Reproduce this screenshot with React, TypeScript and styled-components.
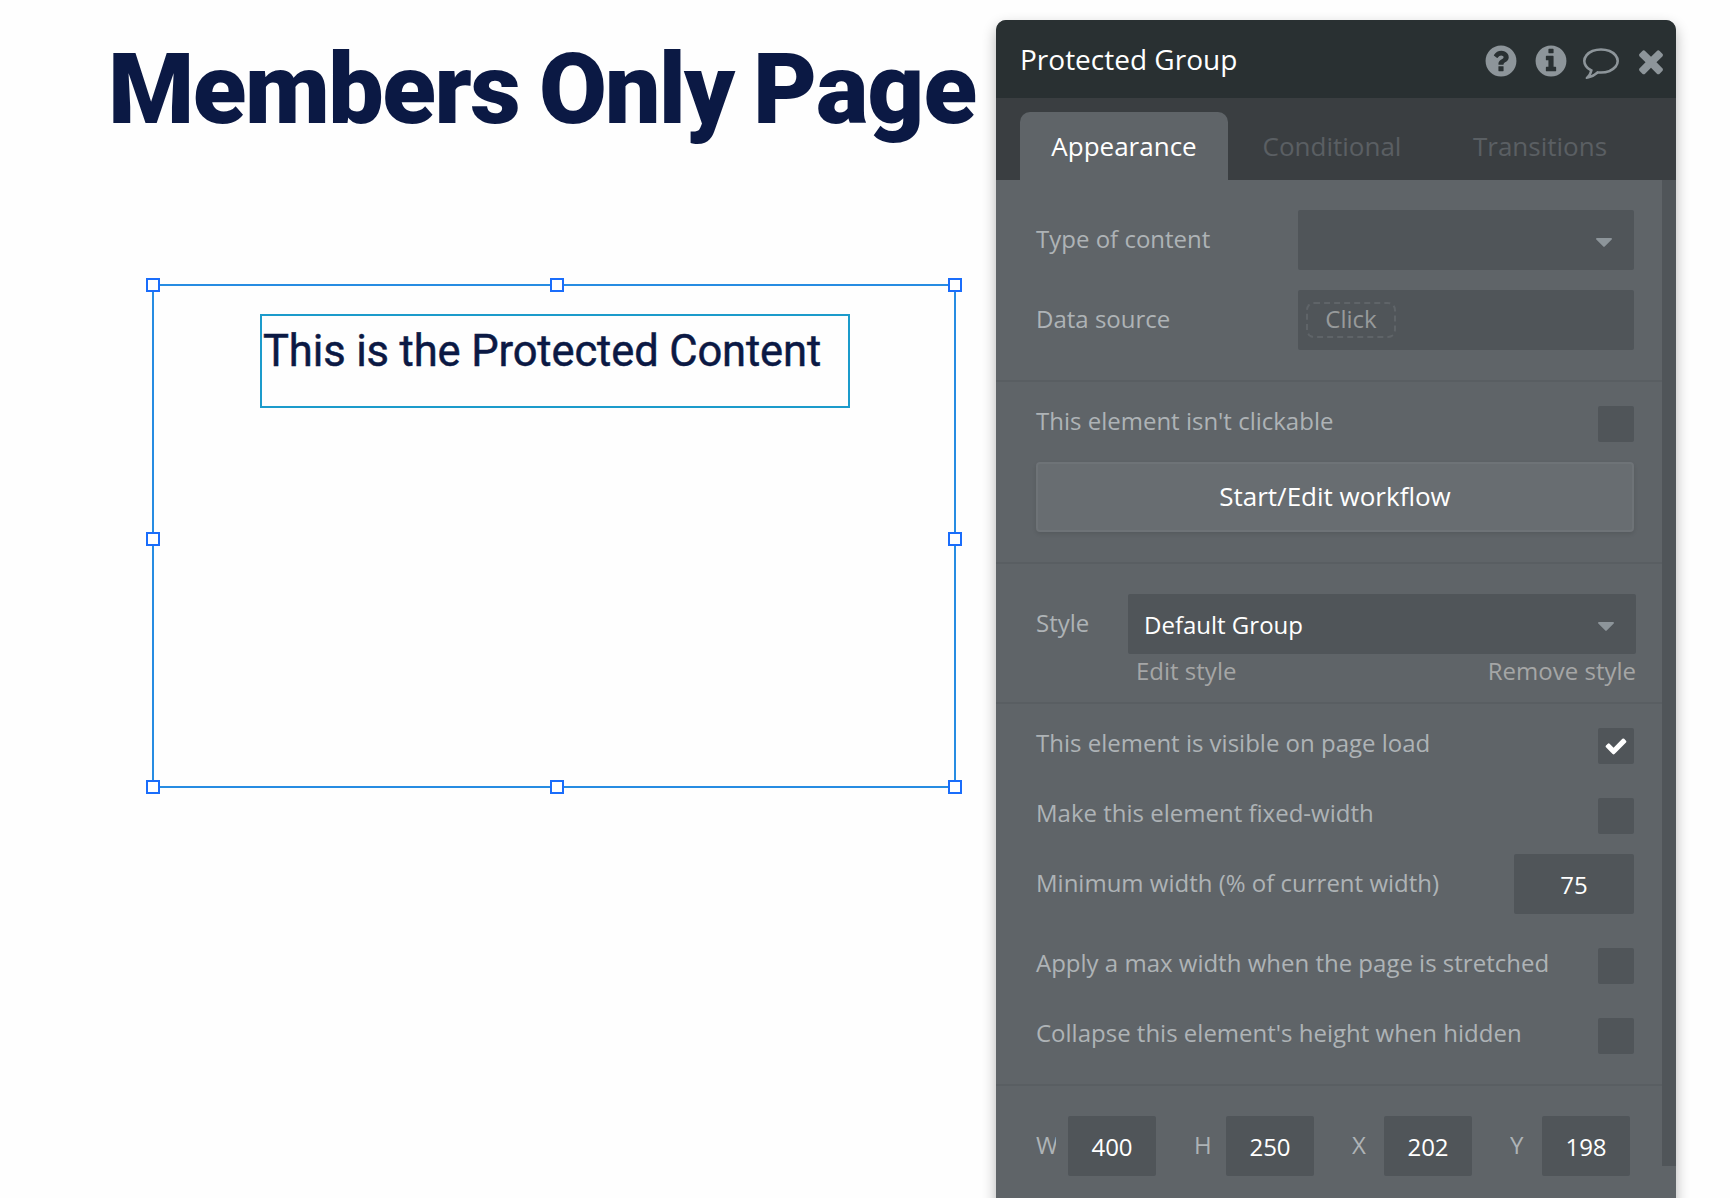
import React from "react";
import styled, { createGlobalStyle, css } from "styled-components";

const GlobalStyle = createGlobalStyle`
  *, *::before, *::after { box-sizing: border-box; }
  html, body { margin: 0; padding: 0; background: #fefefe; overflow: hidden; }
  body { font-family: "Open Sans", "Noto Sans", sans-serif; }
`;

const Workspace = styled.div`
  display: flex;
  width: 1730px;
  height: 1198px;
  overflow: hidden;
  background: #fefefe;
`;

const Canvas = styled.main`
  position: relative;
  flex: 0 0 996px;
  color: #0b1944;
  font-family: Roboto, "Liberation Sans", sans-serif;
`;

const Heading = styled.h1`
  position: absolute;
  left: 108px;
  top: 32px;
  display: flex;
  margin: 0;
  font-size: 98.5px;
  font-weight: 900;
  line-height: 116px;
  white-space: pre;
`;

const Word = styled.span<{ $width: number; $spacing: number }>`
  flex: none;
  width: ${(p) => p.$width}px;
  letter-spacing: ${(p) => p.$spacing}px;
`;

const SelectedGroup = styled.section`
  position: absolute;
  left: 152px;
  top: 284px;
  width: 804px;
  height: 504px;
  border: 2px solid #278ce2;
`;

const TextElement = styled.p`
  position: absolute;
  left: 106px;
  top: 28px;
  width: 590px;
  height: 94px;
  margin: 0;
  padding: 9px 0 0 1px;
  border: 2px solid #1c9bcb;
  font-size: 43.5px;
  font-weight: 400;
  line-height: 54px;
  letter-spacing: -0.12px;
  -webkit-text-stroke: 0.5px currentColor;
  white-space: nowrap;
`;

const Handle = styled.span<{ $x: number; $y: number }>`
  position: absolute;
  left: ${(p) => p.$x}px;
  top: ${(p) => p.$y}px;
  width: 14px;
  height: 14px;
  border: 2px solid #1a6dfb;
  background: #fff;
`;

const Panel = styled.aside`
  display: flex;
  flex-direction: column;
  flex: 0 0 680px;
  height: 1200px;
  margin-top: 20px;
  border-radius: 10px 10px 0 0;
  background: #5f6468;
  box-shadow: 0 6px 14px rgba(0, 0, 0, 0.3);
`;

const PanelHeader = styled.header`
  display: flex;
  align-items: center;
  justify-content: space-between;
  flex: 0 0 78px;
  padding: 0 7px 0 24px;
  border-radius: 10px 10px 0 0;
  background: #293032;
`;

const PanelTitle = styled.h2`
  margin: 0;
  color: #fff;
  font-size: 28px;
  font-weight: 400;
  line-height: 38px;
`;

const HeaderActions = styled.div`
  display: flex;
  gap: 14px;
  padding-top: 4px;
  color: #8d959a;
`;

const IconButton = styled.button`
  display: flex;
  padding: 0;
  border: 0;
  background: none;
  color: inherit;
`;

const TabBar = styled.nav`
  display: flex;
  align-items: flex-end;
  flex: 0 0 82px;
  padding-left: 24px;
  background: #3a3e41;
`;

const Tab = styled.button<{ $active?: boolean }>`
  width: 208px;
  height: 68px;
  padding: 0;
  border: 0;
  border-radius: 10px 10px 0 0;
  background: ${(p) => (p.$active ? "#5f6468" : "transparent")};
  color: ${(p) => (p.$active ? "#fff" : "#5a5f63")};
  font: 400 26px/36px "Open Sans", sans-serif;
`;

const PanelBody = styled.div`
  display: flex;
  flex: 1;
`;

const Properties = styled.div`
  flex: 0 0 666px;
`;

const ScrollTrack = styled.div`
  flex: 0 0 14px;
  height: 986px;
  background: #505559;
`;

const Section = styled.section<{ $height: number; $top: number; $gap?: number }>`
  display: flex;
  flex-direction: column;
  gap: ${(p) => p.$gap ?? 20}px;
  height: ${(p) => p.$height}px;
  padding: ${(p) => p.$top}px 28px 0 40px;
  border-bottom: 2px solid #595e62;
`;

const Row = styled.div<{ $height?: number; $tight?: boolean }>`
  display: flex;
  align-items: center;
  justify-content: space-between;
  flex: none;
  height: ${(p) => p.$height ?? 60}px;
  margin-top: ${(p) => (p.$tight ? -14 : 0)}px;
`;

const Label = styled.label<{ $lift?: number }>`
  padding-bottom: ${(p) => p.$lift ?? 2}px;
  color: #aeb3b6;
  font-size: 24px;
  line-height: 32px;
  white-space: nowrap;
`;

const fieldSurface = css`
  border-radius: 2px;
  background: #505559;
`;

const Field = styled.div<{ $width: number }>`
  ${fieldSurface}
  display: flex;
  align-items: center;
  flex: none;
  width: ${(p) => p.$width}px;
  height: 60px;
  padding-left: 8px;
`;

const SelectField = styled(Field)<{ $shift?: number }>`
  justify-content: space-between;
  margin-right: ${(p) => -(p.$shift ?? 0)}px;
  padding: 2px 22px 0 16px;
  color: #fff;
  font-size: 24px;
  line-height: 32px;
`;

const NumberField = styled(Field)`
  justify-content: center;
  padding: 2px 0 0;
  color: #fff;
  font-size: 24px;
  line-height: 32px;
`;

const ExpressionSlot = styled.span`
  display: flex;
  align-items: center;
  justify-content: center;
  width: 90px;
  height: 36px;
  padding-bottom: 2px;
  border: 2px dashed #5f6468;
  border-radius: 8px;
  color: #979a9b;
  font-size: 24px;
  line-height: 30px;
`;

const Checkbox = styled.span`
  ${fieldSurface}
  display: flex;
  align-items: center;
  justify-content: center;
  flex: none;
  width: 36px;
  height: 36px;
  padding-bottom: 1px;
  color: #fff;
`;

const WorkflowButton = styled.button`
  flex: none;
  height: 70px;
  padding: 0 0 2px;
  border: 2px solid #6e7377;
  border-radius: 4px;
  background: #686d71;
  box-shadow: 0 2px 4px rgba(0, 0, 0, 0.1);
  color: #fff;
  font: 400 26px/36px "Open Sans", sans-serif;
`;

const StyleLinks = styled.div`
  display: flex;
  justify-content: space-between;
  margin: 1px -2px 0 100px;
  color: #a5a6a6;
  font-size: 24px;
  line-height: 32px;
`;

const Geometry = styled.div`
  display: flex;
  gap: 38px;
`;

const GeometryItem = styled.div`
  display: flex;
  align-items: center;
  gap: 12px;
`;

const AxisLabel = styled(Label)`
  width: 20px;
  overflow: hidden;
`;

const CaretIcon = styled.svg`
  margin-top: 2px;
  fill: #8d959a;
`;

const ICONS = {
  help:
    "M1024 1376v-192q0-14-9-23t-23-9h-192q-14 0-23 9t-9 23v192q0 14 9 23t23 9h192q14 0 23-9t9-23zm256-672q0-88-55.5-163t-138.5-116-170-41q-243 0-371 213-15 24 8 42l132 100q7 6 19 6 16 0 25-12 53-68 86-92 34-24 86-24 48 0 85.5 26t37.5 59q0 38-20 61t-68 45q-63 28-115.5 86.5t-52.5 125.5v36q0 14 9 23t23 9h192q14 0 23-9t9-23q0-19 21.5-49.5t54.5-49.5q32-18 49-28.5t46-35 44.5-48 28-60.5 12.5-81z",
  info:
    "M1152 1376v-160q0-14-9-23t-23-9h-96v-512q0-14-9-23t-23-9h-320q-14 0-23 9t-9 23v160q0 14 9 23t23 9h96v320h-96q-14 0-23 9t-9 23v160q0 14 9 23t23 9h448q14 0 23-9t9-23zm-128-896v-160q0-14-9-23t-23-9h-192q-14 0-23 9t-9 23v160q0 14 9 23t23 9h192q14 0 23-9t9-23z",
  comment:
    "M896 384q-204 0-381.5 69.5t-282 187.5-104.5 255q0 112 71.5 213.5t201.5 175.5l87 50-27 96q-24 91-70 172 152-63 275-171l43-38 57 6q69 8 130 8 204 0 381.5-69.5t282-187.5 104.5-255-104.5-255-282-187.5-381.5-69.5zm896 512q0 174-120 321.5t-326 233-450 85.5q-70 0-145-8-198 175-460 242-49 14-114 22h-5q-15 0-27-10.5t-16-27.5v-1q-3-4-.5-12t2-10 4.5-9.5l6-9 7-8.5 8-9q7-8 31-34.5t34.5-38 31-39.5 32.5-51 27-59 26-76q-157-89-247.5-220t-90.5-281q0-174 120-321.5t326-233 450-85.5 450 85.5 326 233 120 321.5z",
  close:
    "M1490 1322q0 40-28 68l-136 136q-28 28-68 28t-68-28l-294-294-294 294q-28 28-68 28t-68-28l-136-136q-28-28-28-68t28-68l294-294-294-294q-28-28-28-68t28-68l136-136q28-28 68-28t68 28l294 294 294-294q28-28 68-28t68 28l136 136q28 28 28 68t-28 68l-294 294 294 294q28 28 28 68z",
  check:
    "M1671 566q0 40-28 68l-724 724-136 136q-28 28-68 28t-68-28l-136-136-362-362q-28-28-28-68t28-68l136-136q28-28 68-28t68 28l294 295 656-657q28-28 68-28t68 28l136 136q28 28 28 68z",
};

function Icon({ name, size = 36 }: { name: keyof typeof ICONS; size?: number }) {
  const onDisc = name === "help" || name === "info";
  return (
    <svg width={size} height={size} viewBox="0 0 1792 1792" fill="currentColor" overflow="visible">
      {onDisc && <circle cx="896" cy="896" r="768" />}
      <path d={ICONS[name]} fill={onDisc ? "#293032" : "currentColor"} />
    </svg>
  );
}

function Caret() {
  return (
    <CaretIcon width="16" height="9" viewBox="0 0 16 9">
      <path d="M1 0H15Q16 0 16 .9Q16 1.200 15.700 1.500L8.700 8.600Q8 9.200 7.300 8.600L.3 1.500Q0 1.200 0 .9Q0 0 1 0Z" />
    </CaretIcon>
  );
}

function CheckRow({ label, checked = false }: { label: string; checked?: boolean }) {
  return (
    <Row $height={36}>
      <Label $lift={6}>{label}</Label>
      <Checkbox>{checked && <Icon name="check" size={24} />}</Checkbox>
    </Row>
  );
}

const HANDLES: [number, number][] = [
  [-8, -8], [396, -8], [794, -8],
  [-8, 246], [794, 246],
  [-8, 494], [396, 494], [794, 494],
];

const GEOMETRY: [string, string][] = [["W", "400"], ["H", "250"], ["X", "202"], ["Y", "198"]];

export default function App() {
  return (
    <>
      <GlobalStyle />
      <Workspace>
        <Canvas>
          <Heading>
            <Word $width={431} $spacing={-1.5}>Members </Word>
            <Word $width={214} $spacing={-1.9}>Only </Word>
            <Word $width={230} $spacing={-0.7}>Page</Word>
          </Heading>
          <SelectedGroup>
            <TextElement>This is the Protected Content</TextElement>
            {HANDLES.map(([x, y]) => (
              <Handle key={`${x}:${y}`} $x={x} $y={y} />
            ))}
          </SelectedGroup>
        </Canvas>
        <Panel>
          <PanelHeader>
            <PanelTitle>Protected Group</PanelTitle>
            <HeaderActions>
              <IconButton aria-label="Help"><Icon name="help" /></IconButton>
              <IconButton aria-label="Info"><Icon name="info" /></IconButton>
              <IconButton aria-label="Comment"><Icon name="comment" /></IconButton>
              <IconButton aria-label="Close"><Icon name="close" /></IconButton>
            </HeaderActions>
          </PanelHeader>
          <TabBar>
            <Tab $active>Appearance</Tab>
            <Tab>Conditional</Tab>
            <Tab>Transitions</Tab>
          </TabBar>
          <PanelBody>
            <Properties>
              <Section $height={202} $top={30}>
                <Row>
                  <Label>Type of content</Label>
                  <SelectField $width={336}><span /><Caret /></SelectField>
                </Row>
                <Row>
                  <Label>Data source</Label>
                  <Field $width={336}><ExpressionSlot>Click</ExpressionSlot></Field>
                </Row>
              </Section>
              <Section $height={182} $top={24}>
                <CheckRow label="This element isn't clickable" />
                <WorkflowButton>Start/Edit workflow</WorkflowButton>
              </Section>
              <Section $height={140} $top={30} $gap={0}>
                <Row>
                  <Label>Style</Label>
                  <SelectField $width={508} $shift={2}><span>Default Group</span><Caret /></SelectField>
                </Row>
                <StyleLinks><span>Edit style</span><span>Remove style</span></StyleLinks>
              </Section>
              <Section $height={382} $top={24} $gap={34}>
                <CheckRow label="This element is visible on page load" checked />
                <CheckRow label="Make this element fixed-width" />
                <Row $tight>
                  <Label>Minimum width (% of current width)</Label>
                  <NumberField $width={120}>75</NumberField>
                </Row>
                <CheckRow label="Apply a max width when the page is stretched" />
                <CheckRow label="Collapse this element's height when hidden" />
              </Section>
              <Section $height={150} $top={30}>
                <Geometry>
                  {GEOMETRY.map(([axis, value]) => (
                    <GeometryItem key={axis}>
                      <AxisLabel>{axis}</AxisLabel>
                      <NumberField $width={88}>{value}</NumberField>
                    </GeometryItem>
                  ))}
                </Geometry>
              </Section>
            </Properties>
            <ScrollTrack />
          </PanelBody>
        </Panel>
      </Workspace>
    </>
  );
}
